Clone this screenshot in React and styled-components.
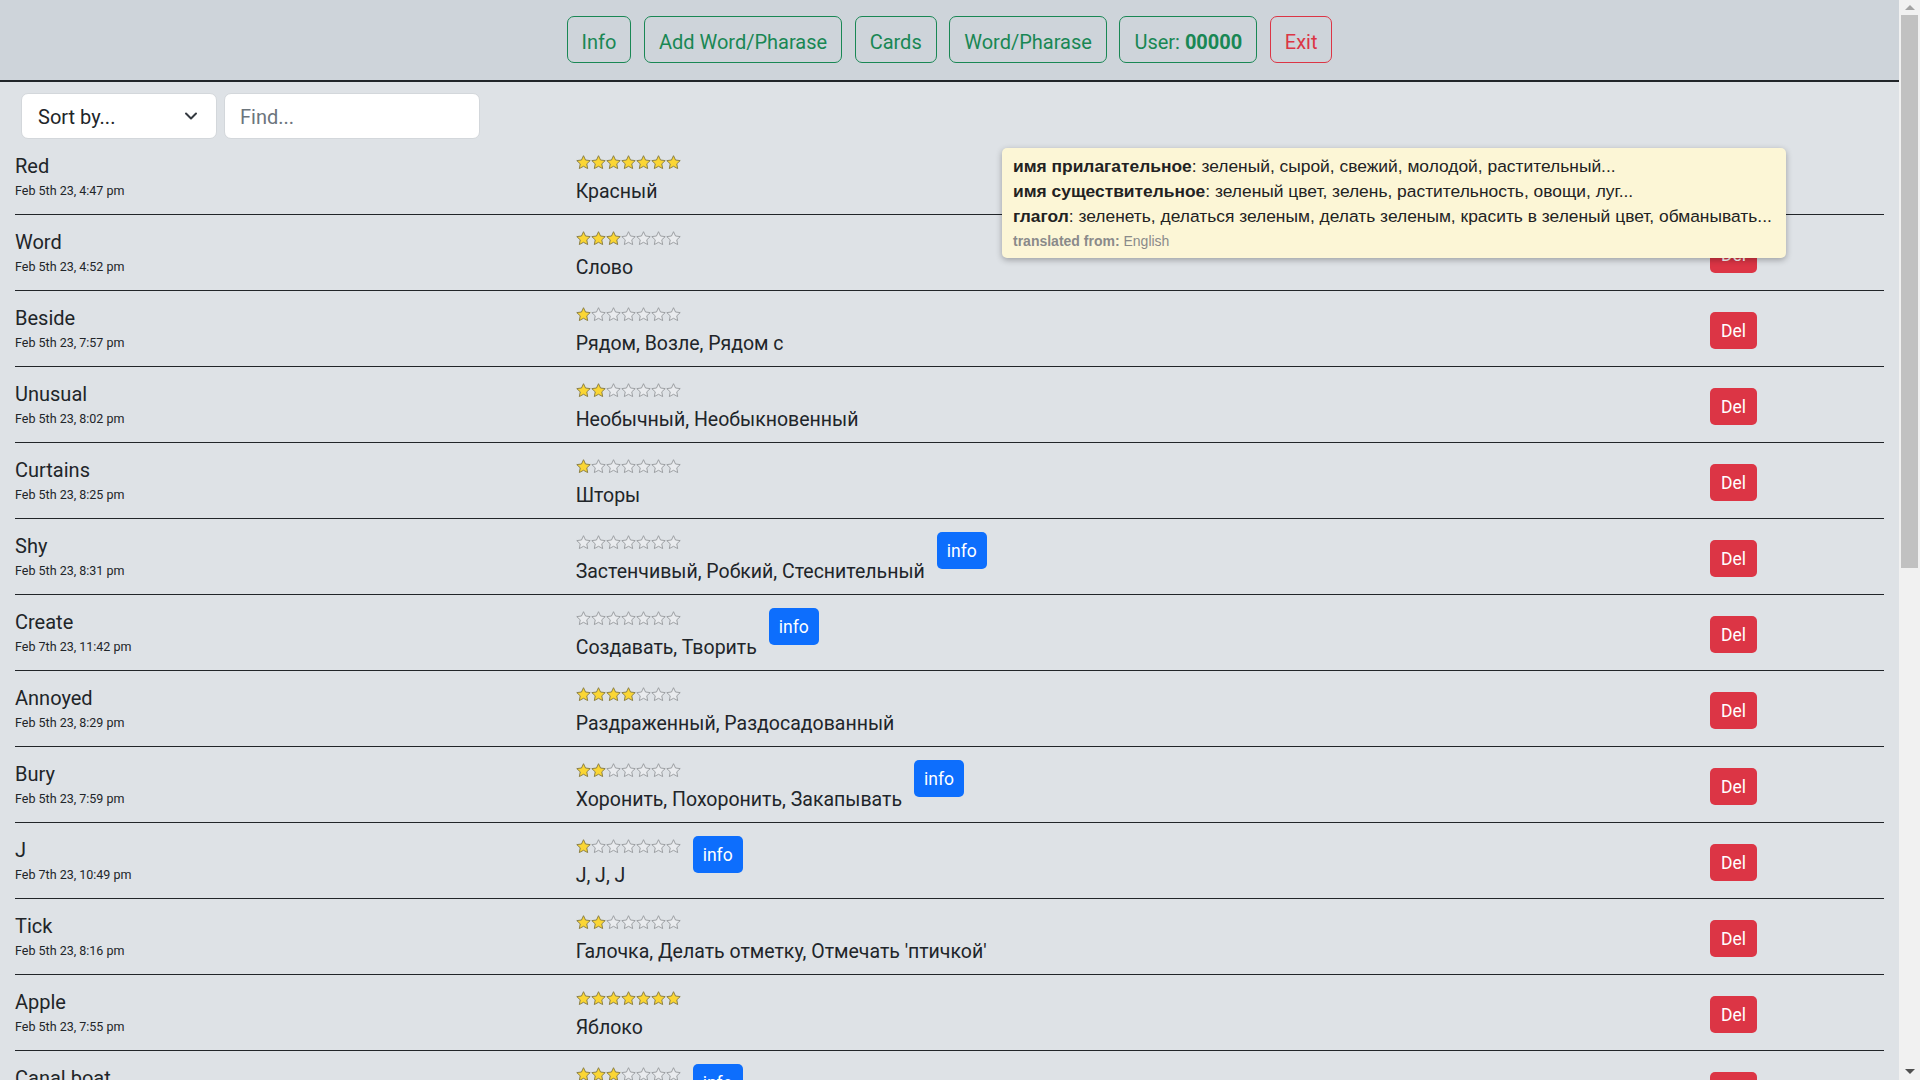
import React from "react";
import styled, { createGlobalStyle } from "styled-components";
import { ChevronDown } from "lucide-react";

const words = [
  { word: "Red", date: "Feb 5th 23, 4:47 pm", tr: "Красный", stars: 7 },
  { word: "Word", date: "Feb 5th 23, 4:52 pm", tr: "Слово", stars: 3 },
  { word: "Beside", date: "Feb 5th 23, 7:57 pm", tr: "Рядом, Возле, Рядом с", stars: 1 },
  { word: "Unusual", date: "Feb 5th 23, 8:02 pm", tr: "Необычный, Необыкновенный", stars: 2 },
  { word: "Curtains", date: "Feb 5th 23, 8:25 pm", tr: "Шторы", stars: 1 },
  { word: "Shy", date: "Feb 5th 23, 8:31 pm", tr: "Застенчивый, Робкий, Стеснительный", stars: 0, info: true },
  { word: "Create", date: "Feb 7th 23, 11:42 pm", tr: "Создавать, Творить", stars: 0, info: true },
  { word: "Annoyed", date: "Feb 5th 23, 8:29 pm", tr: "Раздраженный, Раздосадованный", stars: 4 },
  { word: "Bury", date: "Feb 5th 23, 7:59 pm", tr: "Хоронить, Похоронить, Закапывать", stars: 2, info: true },
  { word: "J", date: "Feb 7th 23, 10:49 pm", tr: "J, J, J", stars: 1, info: true },
  { word: "Tick", date: "Feb 5th 23, 8:16 pm", tr: "Галочка, Делать отметку, Отмечать 'птичкой'", stars: 2 },
  { word: "Apple", date: "Feb 5th 23, 7:55 pm", tr: "Яблоко", stars: 7 },
  { word: "Canal boat", date: "Feb 5th 23, 8:12 pm", tr: "Баржа", stars: 3, info: true },
];

const GlobalStyle = createGlobalStyle`
  html, body, #root {
    height: 100%;
  }
  body {
    margin: 0;
    overflow: hidden;
    background: #dee2e6;
    color: #212529;
    font-family: Roboto, "Noto Sans", sans-serif;
  }
`;

const STAR =
  "12,1.6 15.1,8.2 22.3,9.1 17,14.1 18.4,21.3 12,17.8 5.6,21.3 7,14.1 1.7,9.1 8.9,8.2";

function Stars({ count }) {
  return (
    <StarLine>
      {Array.from({ length: 7 }).map((_, i) => (
        <svg key={i} width="15" height="15" viewBox="0.5 0.5 23 23">
          {i < count ? (
            <polygon points={STAR} fill="#fbd633" stroke="#8a7f45" strokeWidth="1.5" strokeLinejoin="round" />
          ) : (
            <polygon points={STAR} fill="#e9ebee" stroke="#979a9d" strokeWidth="1.4" strokeLinejoin="round" />
          )}
        </svg>
      ))}
    </StarLine>
  );
}

export default function App() {
  return (
    <Viewport>
      <GlobalStyle />
      <Scroller>
        <Page>
          <Header>
            <NavButton>Info</NavButton>
            <NavButton>Add Word/Pharase</NavButton>
            <NavButton>Cards</NavButton>
            <NavButton>Word/Pharase</NavButton>
            <NavButton>
              User: <b>00000</b>
            </NavButton>
            <NavButton $danger>Exit</NavButton>
          </Header>

          <Controls>
            <SortBox>
              Sort by...
              <ChevronDown size={20} strokeWidth={2.4} color="#343a40" />
            </SortBox>
            <FindInput placeholder="Find..." />
          </Controls>

          <List>
            {words.map((w) => (
              <Row key={w.word}>
                <WordCell>
                  <WordText>{w.word}</WordText>
                  <DateText>{w.date}</DateText>
                </WordCell>
                <TransCell>
                  <TransStack>
                    <Stars count={w.stars} />
                    <TransText>{w.tr}</TransText>
                  </TransStack>
                  {w.info && <InfoButton>info</InfoButton>}
                </TransCell>
                <DelCell>
                  <DelButton>Del</DelButton>
                </DelCell>
              </Row>
            ))}
          </List>

          <Tooltip>
            <TipLine>
              <b>имя прилагательное</b>: зеленый, сырой, свежий, молодой, растительный...
            </TipLine>
            <TipLine>
              <b>имя существительное</b>: зеленый цвет, зелень, растительность, овощи, луг...
            </TipLine>
            <TipLine>
              <b>глагол</b>: зеленеть, делаться зеленым, делать зеленым, красить в зеленый цвет, обманывать...
            </TipLine>
            <TipSource>
              <b>translated from:</b> English
            </TipSource>
          </Tooltip>
        </Page>
      </Scroller>

      <ScrollBar>
        <ScrollArrow $up />
        <ScrollTrack>
          <ScrollThumb />
        </ScrollTrack>
        <ScrollArrow />
      </ScrollBar>
    </Viewport>
  );
}

const Viewport = styled.div`
  display: flex;
  height: 100vh;
  overflow: hidden;
`;

const Scroller = styled.div`
  flex: 1;
  min-width: 0;
  overflow: hidden;
`;

const ScrollBar = styled.div`
  display: flex;
  flex-direction: column;
  width: 21px;
  flex-shrink: 0;
  background: #f1f1f1;
`;

const ScrollArrow = styled.div`
  display: flex;
  justify-content: center;
  align-items: ${(p) => (p.$up ? "flex-start" : "flex-end")};
  height: 15px;
  padding: ${(p) => (p.$up ? "5px 0 0" : "0 0 6px")};
  box-sizing: border-box;

  &::after {
    content: "";
    border-left: 5px solid transparent;
    border-right: 5px solid transparent;
    ${(p) =>
      p.$up
        ? "border-bottom: 5px solid #a3a3a3;"
        : "border-top: 5px solid #505050;"}
  }
`;

const ScrollTrack = styled.div`
  flex: 1;
  padding: 0 2px;
`;

const ScrollThumb = styled.div`
  height: 553px;
  background: #c1c1c1;
`;

const Page = styled.div`
  position: relative;
  padding-bottom: 12px;
`;

const Header = styled.div`
  display: flex;
  justify-content: center;
  gap: 12.5px;
  padding: 16px 0 17px;
  background: #ced4da;
  border-bottom: 2px solid #212529;
`;

const NavButton = styled.button`
  box-sizing: border-box;
  height: 47px;
  padding: 4px 14px 0;
  border: 1px solid ${(p) => (p.$danger ? "#dc3545" : "#198754")};
  border-radius: 7px;
  background: transparent;
  color: ${(p) => (p.$danger ? "#dc3545" : "#198754")};
  font-family: Roboto, "Noto Sans", sans-serif;
  font-size: 20px;
  cursor: pointer;

  b {
    font-weight: 700;
  }
`;

const Controls = styled.div`
  display: flex;
  gap: 7px;
  padding: 11px 0 0 21px;
`;

const SortBox = styled.div`
  box-sizing: border-box;
  display: flex;
  align-items: center;
  justify-content: space-between;
  width: 196px;
  height: 46px;
  padding: 2px 15px 0 16px;
  background: #fff;
  border: 1px solid #d3d7db;
  border-radius: 7px;
  font-size: 20px;
  color: #212529;

  svg {
    margin-top: -2px;
  }
`;

const FindInput = styled.input`
  box-sizing: border-box;
  width: 256px;
  height: 46px;
  padding: 2px 15px 0;
  background: #fff;
  border: 1px solid #d3d7db;
  border-radius: 7px;
  font-family: Roboto, "Noto Sans", sans-serif;
  font-size: 20px;
  color: #212529;
  outline: none;

  &::placeholder {
    color: #6c757d;
  }
`;

const List = styled.div`
  padding: 0 15px;
`;

const Row = styled.div`
  box-sizing: border-box;
  display: grid;
  grid-template-columns: 30% 60% 10%;
  align-items: start;
  height: 76px;
  padding-top: 12px;
  border-bottom: 1px solid #212529;
`;

const WordCell = styled.div`
  display: flex;
  flex-direction: column;
`;

const WordText = styled.div`
  font-size: 20px;
  line-height: 30px;
`;

const DateText = styled.div`
  font-size: 12.5px;
  line-height: 20px;
`;

const TransCell = styled.div`
  display: flex;
  align-items: flex-start;
  gap: 12px;
`;

const TransStack = styled.div`
  display: flex;
  flex-direction: column;
`;

const StarLine = styled.div`
  display: flex;
  height: 26px;
  padding-top: 4px;
  box-sizing: border-box;
`;

const TransText = styled.div`
  font-size: 19.5px;
  line-height: 30px;
  white-space: nowrap;
`;

const InfoButton = styled.button`
  height: 37px;
  margin-top: 1px;
  padding: 0 10px;
  border: none;
  border-radius: 5px;
  background: #0d6efd;
  color: #fff;
  font-family: Roboto, "Noto Sans", sans-serif;
  font-size: 17.5px;
`;

const DelCell = styled.div`
  padding: 9px 0 0 13px;
`;

const DelButton = styled.button`
  width: 47px;
  height: 37px;
  padding: 0;
  border: none;
  border-radius: 5px;
  background: #dc3545;
  color: #fff;
  font-family: Roboto, "Noto Sans", sans-serif;
  font-size: 17.5px;
`;

const Tooltip = styled.div`
  position: absolute;
  left: 1002px;
  top: 148px;
  width: 784px;
  box-sizing: border-box;
  padding: 6px 10px 5px 11px;
  background: #fcf6d6;
  border-radius: 5px;
  box-shadow: 0 2px 6px rgba(0, 0, 0, 0.3);
  font-family: "Liberation Sans", Arial, sans-serif;
  color: #222;
  z-index: 10;
`;

const TipLine = styled.div`
  font-size: 17.4px;
  line-height: 25px;
  white-space: nowrap;

  b {
    font-weight: 700;
  }
`;

const TipSource = styled.div`
  font-size: 14px;
  line-height: 24px;
  color: #8a8a8a;

  b {
    font-weight: 700;
  }
`;
